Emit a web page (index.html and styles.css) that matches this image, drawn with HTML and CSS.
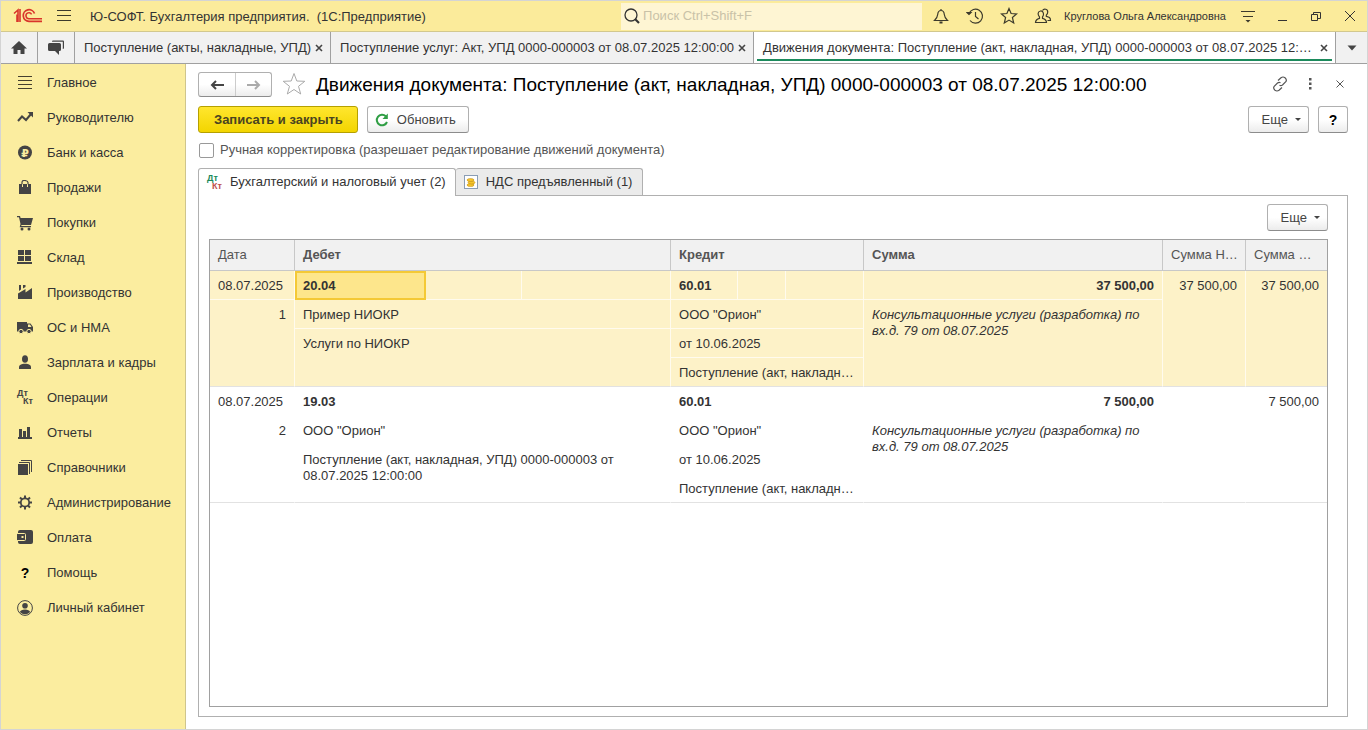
FILE: index.html
```
<!DOCTYPE html>
<html lang="ru">
<head>
  <meta charset="utf-8">
  <title>Движения документа</title>
  <link rel="stylesheet" href="styles.css">
</head>
<body>
  <header class="titlebar">
    <svg class="logo" width="30" height="16" viewBox="0 0 30 16" fill="none" stroke="#d9342b">
      <path d="M1 5.5L5 2v12M4 6.500V14M7 1v13" stroke-width="1.600"/>
      <path d="M21.500 5.500A5.800 5.800 0 1 0 16 13.300H29" stroke-width="1.700"/>
      <path d="M18.600 6.300A3 3 0 1 0 16.300 10.700H29" stroke-width="1.500"/>
    </svg>
    <button class="tool" aria-label="Меню">
      <svg width="16" height="14" viewBox="0 0 16 14" stroke="#3c3a2c"><path d="M1 1.500h14M1 6.500h14M1 11.500h14"/></svg>
    </button>
    <span class="app-name">Ю-СОФТ. Бухгалтерия предприятия.&nbsp; (1С:Предприятие)</span>
    <label class="search">
      <svg width="18" height="18" viewBox="0 0 18 18" fill="none" stroke="#333"><circle cx="8" cy="8" r="6" stroke-width="1.300"/><path d="M12 12l4 4" stroke-width="2.200"/></svg>
      <input type="text" placeholder="Поиск Ctrl+Shift+F" aria-label="Поиск">
    </label>
    <button class="tool" aria-label="Уведомления">
      <svg width="18" height="18" viewBox="0 0 18 18" fill="none" stroke="#3c3a2c" stroke-width="1.200"><path d="M9 2v1.500M2.500 13.500c2-2 3-3.500 3.200-6C5.900 5 7 3.500 9 3.500s3.100 1.500 3.300 4c.2 2.500 1.200 4 3.200 6z"/><path d="M7.500 15.500h3" stroke-width="2"/></svg>
    </button>
    <button class="tool" aria-label="История">
      <svg width="18" height="18" viewBox="0 0 18 18" fill="none" stroke="#3c3a2c" stroke-width="1.200"><path d="M3 6.500A7 7 0 1 1 4 13.500M9.500 5v4.500l3 2.500"/><path d="M1 5.500l2 2 2-2z" fill="#3c3a2c"/></svg>
    </button>
    <button class="tool" aria-label="Избранное">
      <svg width="18" height="18" viewBox="0 0 18 18" fill="none" stroke="#3c3a2c" stroke-width="1.200"><path d="M9 1.500l2.100 5 5.400.5-4.100 3.500 1.300 5.500L9 13.100 4.300 16l1.300-5.500L1.500 7l5.400-.5z"/></svg>
    </button>
    <button class="tool" aria-label="Пользователь">
      <svg width="18" height="18" viewBox="0 0 18 18" fill="none" stroke="#3c3a2c" stroke-width="1.200"><path d="M1.500 15.500c0-3 1.500-3.500 4-4.200V10C3.500 8 3.500 4.500 6.500 4S10.500 8 8.500 10v1.300c2.500.7 4 1.200 4 4.200z"/><path d="M8.500 3.500C10 1 14 2 13.700 5.200c0 1.500-.7 2.300-1.400 3v1.200c2.700.7 4.200 1.100 4.200 4.100h-3"/></svg>
    </button>
    <a class="user" href="#">Круглова Ольга Александровна</a>
    <button class="tool" aria-label="Настройки">
      <svg width="16" height="14" viewBox="0 0 16 14" stroke="#3c3a2c"><path d="M1 2.500h14M3 7.500h10"/><path d="M5.500 11h5L8 13.500z" fill="#3c3a2c" stroke="none"/></svg>
    </button>
    <button class="tool" aria-label="Свернуть">
      <svg width="12" height="12" viewBox="0 0 12 12" stroke="#333"><path d="M2 10.500h9"/></svg>
    </button>
    <button class="tool" aria-label="Развернуть">
      <svg width="12" height="12" viewBox="0 0 12 12" fill="none" stroke="#333"><path d="M1.500 4.500h6v6h-6zM3.500 4V2.500h7v6H8"/></svg>
    </button>
    <button class="tool" aria-label="Закрыть">
      <svg width="12" height="12" viewBox="0 0 12 12" stroke="#333"><path d="M1 1l10 10M11 1L1 11"/></svg>
    </button>
  </header>

  <nav class="windows">
    <button class="win-icon" aria-label="Начальная страница">
      <svg width="16" height="14" viewBox="0 0 16 14" fill="#444"><path d="M8 0L0 7.500h2.500V13h4V9h3v4h4V7.500H16z"/></svg>
    </button>
    <button class="win-icon" aria-label="Обсуждения">
      <svg width="18" height="16" viewBox="0 0 18 16" fill="#444"><path d="M5 1.500Q5 .5 6 .5h10q1 0 1 1V8q0 1-1.200 1V1.800H5z"/><path d="M2.500 3h10q1.500 0 1.500 1.500v5q0 1.500-1.500 1.500H12v4l-4-4H2.500Q1 11 1 9.500v-5Q1 3 2.500 3z"/></svg>
    </button>
    <div class="win"><a href="#">Поступление (акты, накладные, УПД)</a>
      <button aria-label="Закрыть"><svg width="8" height="8" viewBox="0 0 8 8" stroke="#444" stroke-width="1.600"><path d="M1 1l6 6M7 1L1 7"/></svg></button></div>
    <div class="win"><a href="#">Поступление услуг: Акт, УПД 0000-000003 от 08.07.2025 12:00:00</a>
      <button aria-label="Закрыть"><svg width="8" height="8" viewBox="0 0 8 8" stroke="#444" stroke-width="1.600"><path d="M1 1l6 6M7 1L1 7"/></svg></button></div>
    <div class="win current"><a href="#">Движения документа: Поступление (акт, накладная, УПД) 0000-000003 от 08.07.2025 12:…</a>
      <button aria-label="Закрыть"><svg width="8" height="8" viewBox="0 0 8 8" stroke="#444" stroke-width="1.600"><path d="M1 1l6 6M7 1L1 7"/></svg></button></div>
    <button class="win-more" aria-label="Все окна"><svg width="10" height="6" viewBox="0 0 10 6" fill="#444"><path d="M.5.500h9L5 5.500z"/></svg></button>
  </nav>

  <div class="workspace">
    <nav class="sections">
      <a href="#"><svg width="16" height="16" viewBox="0 0 16 16" stroke="#45402f"><path d="M1 1.500h14M1 5.500h14M1 9.500h14M1 13.500h14"/></svg>Главное</a>
      <a href="#"><svg width="16" height="16" viewBox="0 0 16 16" fill="none" stroke="#444"><path d="M1 11l4-4.500 4 3.500 5-6" stroke-width="2"/><path d="M10.500 2H16v5.500z" fill="#444" stroke="none"/></svg>Руководителю</a>
      <a href="#"><svg width="16" height="16" viewBox="0 0 16 16"><circle cx="8" cy="7.500" r="7" fill="#444"/><text class="rouble" x="8" y="12" text-anchor="middle">₽</text></svg>Банк и касса</a>
      <a href="#"><svg width="16" height="16" viewBox="0 0 16 16"><path d="M2 4h12v10H2z" fill="#444"/><path d="M5 6V2.500Q5 0 8 .5t3 2V6" fill="none" stroke="#444" stroke-width="1.200"/><path d="M5.500 4.200V7M10.500 4.200V7" stroke="#fbed9f"/></svg>Продажи</a>
      <a href="#"><svg width="16" height="16" viewBox="0 0 16 16" fill="#444"><path d="M0 1h3l.6 2H16l-2 7H4.500l-.3 1H14v1.200H2.700L3.500 9 2 2.300H0z"/><circle cx="5" cy="14" r="1.500"/><circle cx="12" cy="14" r="1.500"/></svg>Покупки</a>
      <a href="#"><svg width="16" height="16" viewBox="0 0 16 16" fill="#444"><path d="M1 0h6v5H1zM8 0h6v5H8zM1 6h6v5H1zM8 6h6v5H8zM0 12h15v2H0z"/></svg>Склад</a>
      <a href="#"><svg width="16" height="16" viewBox="0 0 16 16" fill="#444"><path d="M1 14V8.500L8.500 4v3.500L15 3v11z"/><path d="M2 0h2v4.500L2 6zM6 0h2.500v2L6 3.500z"/></svg>Производство</a>
      <a href="#"><svg width="16" height="16" viewBox="0 0 16 16"><path d="M0 2h10v1.500h3.500L16 7v4.500H0z" fill="#444"/><path d="M11 4.500h2L14.500 7H11z" fill="#fbed9f"/><g fill="#444" stroke="#fbed9f"><circle cx="4" cy="11.500" r="2.200"/><circle cx="12" cy="11.500" r="2.200"/></g></svg>ОС и НМА</a>
      <a href="#"><svg width="16" height="16" viewBox="0 0 16 16" fill="#444"><ellipse cx="8" cy="4" rx="3" ry="3.800"/><path d="M2 14v-2Q2 9.500 6.500 8.800h3Q14 9.500 14 12v2z"/></svg>Зарплата и кадры</a>
      <a href="#"><svg class="dtkt" width="16" height="16" viewBox="0 0 16 16" fill="#444"><text x="0" y="6">Дт</text><text x="6" y="14">Кт</text></svg>Операции</a>
      <a href="#"><svg width="16" height="16" viewBox="0 0 16 16" fill="#444"><path d="M1 12h14v2H1zM2 4h3v8H2zM6 6h3v6H6zM10 2h3v10h-3z"/></svg>Отчеты</a>
      <a href="#"><svg width="16" height="16" viewBox="0 0 16 16"><path d="M1 4h10v11H1z" fill="#444"/><path d="M2 2.500h10.500V14M4 .5h10.500V12" fill="none" stroke="#444"/></svg>Справочники</a>
      <a href="#"><svg width="16" height="16" viewBox="0 0 16 16" fill="none" stroke="#444"><circle cx="8" cy="7.500" r="4.200" stroke-width="1.800"/><path d="M8 .5V3M8 12v2.500M1 7.500h2.500M12.500 7.500H15M3 2.500l2 2M11 10.500l2 2M13 2.500l-2 2M5 10.500l-2 2" stroke-width="2"/></svg>Администрирование</a>
      <a href="#"><svg width="16" height="16" viewBox="0 0 16 16"><rect x="1" y="0" width="15" height="14" rx="2" fill="#444"/><rect x="0" y="3.500" width="8.500" height="7" rx="1" fill="#444" stroke="#fbed9f"/><path d="M0 4h2v6H0z" fill="#444"/><path d="M4.500 6h2v2h-2z" fill="#fbed9f"/></svg>Оплата</a>
      <a href="#"><b class="q">?</b>Помощь</a>
      <a href="#"><svg width="16" height="16" viewBox="0 0 16 16" fill="#444"><circle cx="8" cy="8" r="7.400" fill="none" stroke="#444"/><circle cx="8" cy="5.800" r="2.800"/><path d="M2.800 12q1-2.500 5.200-2.500t5.200 2.500Q11 14.200 8 14.200T2.800 12z"/></svg>Личный кабинет</a>
    </nav>

    <main class="form">
      <div class="form-head">
        <div class="history">
          <button aria-label="Назад"><svg width="14" height="10" viewBox="0 0 14 10" fill="none" stroke="#444" stroke-width="2"><path d="M14 5H2M6 1L2 5l4 4"/></svg></button>
          <button aria-label="Вперед"><svg width="14" height="10" viewBox="0 0 14 10" fill="none" stroke="#aaa" stroke-width="2"><path d="M0 5h12M8 1l4 4-4 4"/></svg></button>
        </div>
        <button class="plain star" aria-label="В избранное"><svg width="24" height="24" viewBox="0 0 24 24" fill="none" stroke="#aaa"><path d="M12 1.500l2.800 7.500 8 .3-6.300 5 2.200 7.700L12 17.500 5.300 22l2.200-7.700-6.300-5 8-.3z"/></svg></button>
        <h1>Движения документа: Поступление (акт, накладная, УПД) 0000-000003 от 08.07.2025 12:00:00</h1>
        <button class="plain" aria-label="Получить ссылку"><svg width="16" height="16" viewBox="0 0 16 16" fill="none" stroke="#555" stroke-width="1.200"><path d="M6 4.500L9 1.700q2-1.400 4 0 2.200 2 .8 4L10.500 9q-1.500 1.200-3 .3M10 11.500L7 14.300q-2 1.400-4 0-2.200-2-.8-4L5.500 7Q7 5.800 8.500 6.700"/></svg></button>
        <button class="plain" aria-label="Дополнительно"><svg width="4" height="12" viewBox="0 0 4 12" fill="#555"><path d="M1 0h2.500v2.500H1zM1 4.500h2.500V7H1zM1 9h2.500v2.500H1z"/></svg></button>
        <button class="plain" aria-label="Закрыть форму"><svg width="8" height="8" viewBox="0 0 8 8" stroke="#555"><path d="M.5.500l7 7M7.500.500l-7 7"/></svg></button>
      </div>

      <div class="commands">
        <button class="btn primary">Записать и закрыть</button>
        <button class="btn"><svg width="14" height="14" viewBox="0 0 14 14" fill="none" stroke="#2f9e44" stroke-width="2"><path d="M12 9A5.300 5.300 0 1 1 10.800 3.200"/><path d="M12.800.500V6H7.500z" fill="#2f9e44" stroke="none"/></svg>Обновить</button>
        <button class="btn more">Еще<i class="caret"></i></button>
        <button class="btn help">?</button>
      </div>

      <label class="manual"><input type="checkbox">Ручная корректировка (разрешает редактирование движений документа)</label>

      <div class="tabs" role="tablist">
        <button class="tab active" role="tab" aria-selected="true"><svg class="dtkt" width="16" height="16" viewBox="0 0 16 16"><text x="0" y="7" fill="#1a8a5a">Дт</text><text x="5" y="15" fill="#c0504d">Кт</text></svg>Бухгалтерский и налоговый учет (2)</button>
        <button class="tab" role="tab" aria-selected="false"><svg width="14" height="14" viewBox="0 0 14 14"><rect x=".5" y=".5" width="13" height="13" fill="#fff" stroke="#8a9db5"/><g fill="#f5c52c" stroke="#b98510" stroke-width=".5"><ellipse cx="6.500" cy="10" rx="3.500" ry="1.500"/><ellipse cx="7.500" cy="7.500" rx="3.500" ry="1.500"/><ellipse cx="6.500" cy="5" rx="3.500" ry="1.500"/></g></svg>НДС предъявленный (1)</button>
      </div>

      <section class="panel">
        <button class="btn more">Еще<i class="caret"></i></button>
        <div class="grid">
          <table>
            <colgroup>
              <col class="c-date"><col class="c-d1"><col class="c-d2"><col class="c-d3"><col class="c-k1"><col class="c-k2"><col class="c-k3"><col><col class="c-dt"><col class="c-kt">
            </colgroup>
            <thead>
              <tr>
                <th class="light">Дата</th>
                <th colspan="3">Дебет</th>
                <th colspan="3">Кредит</th>
                <th>Сумма</th>
                <th class="light">Сумма Н…</th>
                <th class="light">Сумма …</th>
              </tr>
            </thead>
            <tbody class="selected">
              <tr>
                <td>08.07.2025</td>
                <td class="acc cell-current">20.04</td><td></td><td></td>
                <td class="acc">60.01</td><td></td><td></td>
                <td class="acc num">37 500,00</td>
                <td class="num" rowspan="4">37 500,00</td>
                <td class="num last" rowspan="4">37 500,00</td>
              </tr>
              <tr>
                <td class="num" rowspan="3">1</td>
                <td colspan="3">Пример НИОКР</td>
                <td colspan="3">ООО "Орион"</td>
                <td class="note" rowspan="3">Консультационные услуги (разработка) по вх.д. 79 от 08.07.2025</td>
              </tr>
              <tr>
                <td colspan="3" rowspan="2">Услуги по НИОКР</td>
                <td colspan="3">от 10.06.2025</td>
              </tr>
              <tr>
                <td class="cut" colspan="3">Поступление (акт, накладн…</td>
              </tr>
            </tbody>
            <tbody>
              <tr>
                <td>08.07.2025</td>
                <td class="acc">19.03</td><td></td><td></td>
                <td class="acc">60.01</td><td></td><td></td>
                <td class="acc num">7 500,00</td>
                <td class="num" rowspan="4"></td>
                <td class="num last" rowspan="4">7 500,00</td>
              </tr>
              <tr>
                <td class="num" rowspan="3">2</td>
                <td colspan="3">ООО "Орион"</td>
                <td colspan="3">ООО "Орион"</td>
                <td class="note" rowspan="3">Консультационные услуги (разработка) по вх.д. 79 от 08.07.2025</td>
              </tr>
              <tr>
                <td colspan="3" rowspan="2">Поступление (акт, накладная, УПД) 0000-000003 от 08.07.2025 12:00:00</td>
                <td colspan="3">от 10.06.2025</td>
              </tr>
              <tr>
                <td class="cut" colspan="3">Поступление (акт, накладн…</td>
              </tr>
            </tbody>
          </table>
        </div>
      </section>
    </main>
  </div>
</body>
</html>
```
FILE: styles.css
```
* {
  box-sizing: border-box;
}
body {
  margin: 0;
  min-height: 100vh;
  display: flex;
  flex-direction: column;
  border: 1px solid #d4d4d4;
  background: #fff;
  color: #333;
  font: 13px/16px "Liberation Sans", Arial, sans-serif;
}
button, input {
  font: inherit;
  color: inherit;
}
button {
  display: flex;
  align-items: center;
  justify-content: center;
  padding: 0;
  border: none;
  background: none;
}
a {
  color: inherit;
  text-decoration: none;
}
svg {
  flex: none;
}

/* title bar */
.titlebar {
  display: flex;
  align-items: center;
  height: 31px;
  background: #fbeb9b;
  border-bottom: 1px solid #d2c88e;
}
.logo {
  margin-left: 12px;
}
.tool {
  width: 34px;
  height: 30px;
  flex: none;
}
.logo + .tool {
  width: 42px;
}
.app-name {
  margin-left: 5px;
  padding-top: 1px;
  white-space: nowrap;
}
.search {
  display: flex;
  align-items: center;
  width: 301px;
  height: 27px;
  margin: 0 2px 0 auto;
  padding-left: 2px;
  background: #fef5d3;
}
.search input {
  flex: 1;
  min-width: 0;
  padding: 0 2px;
  border: none;
  background: none;
  outline: none;
}
.search input::placeholder {
  color: #c9c2a8;
}
.user {
  margin: 0 5px 0 4px;
  font-size: 11px;
  white-space: nowrap;
}

/* open windows */
.windows {
  display: flex;
  height: 32px;
  background: #f1f1f1;
  border-bottom: 1px solid #a0a0a0;
}
.win-icon {
  width: 37px;
  flex: none;
  border-right: 1px solid #a0a0a0;
}
.win {
  display: flex;
  align-items: center;
  padding: 0 3px 0 9px;
  border-right: 1px solid #a0a0a0;
  white-space: nowrap;
}
.win button {
  width: 16px;
  height: 20px;
  flex: none;
}
.win.current {
  position: relative;
  flex: 1;
  min-width: 0;
  background: #fff;
}
.win.current a {
  flex: 1;
}
.win.current::after {
  content: "";
  position: absolute;
  left: 3px;
  right: 3px;
  bottom: 2px;
  height: 2px;
  background: #1c8a5c;
}
.win-more {
  width: 31px;
  flex: none;
}

.workspace {
  display: flex;
  flex: 1;
}

/* sections */
.sections {
  width: 185px;
  flex: none;
  padding-top: 1px;
  background: #fbed9f;
  border-right: 1px solid #cfc58c;
}
.sections a {
  display: flex;
  align-items: center;
  gap: 14px;
  height: 35px;
  padding-left: 16px;
}
.q {
  width: 16px;
  text-align: center;
  font-size: 14px;
  color: #000;
}
.dtkt {
  overflow: visible;
  font: bold 9px "Liberation Sans", Arial, sans-serif;
}
.rouble {
  font: bold 11px "DejaVu Sans", sans-serif;
  fill: #fbed9f;
}

/* form */
.form {
  display: flex;
  flex-direction: column;
  flex: 1;
  min-width: 0;
  padding: 8px 19px 12px 12px;
}
.form-head {
  display: flex;
  align-items: center;
  height: 25px;
}
.history {
  display: flex;
  height: 25px;
  border: 1px solid #b0b0b0;
  border-bottom-color: #8c8c8c;
  border-radius: 3px;
  background: linear-gradient(#fff 50%, #ececec);
}
.history button {
  width: 36px;
}
.history button + button {
  border-left: 1px solid #ccc;
}
h1 {
  flex: 1;
  margin: 0;
  color: #000;
  font-size: 19px;
  line-height: 24px;
  font-weight: normal;
  white-space: nowrap;
}
.plain {
  width: 30px;
  height: 23px;
  align-self: flex-start;
}
.plain:last-child {
  width: 16px;
  margin-left: 7px;
}
.plain.star {
  width: 24px;
  margin: 0 10px;
}
.commands {
  display: flex;
  gap: 9px;
  margin-top: 9px;
}
.btn {
  height: 27px;
  padding: 0 12px 0 7px;
  border: 1px solid #b0b0b0;
  border-bottom-color: #8c8c8c;
  border-radius: 3px;
  background: linear-gradient(#fff 50%, #ececec);
  color: #444;
}
.btn svg {
  margin-right: 8px;
}
.primary {
  padding: 0 14px 0 15px;
  border-color: #b5a000;
  background: linear-gradient(#ffe62e, #f3d500);
  color: #4a4420;
  font-weight: bold;
}
.more {
  padding: 0 7px 0 13px;
  margin-left: auto;
}
.help {
  width: 30px;
  padding: 0;
  color: #000;
  font-size: 14px;
  font-weight: bold;
}
.caret {
  margin-left: 7px;
  border: 3px solid transparent;
  border-top-color: #444;
  border-bottom: none;
}
.manual {
  display: flex;
  align-items: center;
  gap: 6px;
  height: 16px;
  margin-top: 9px;
  color: #555;
}
.manual input {
  appearance: none;
  width: 15px;
  height: 15px;
  margin: 0 0 0 1px;
  border: 1px solid #999;
  border-radius: 2px;
  background: #fff;
}
.manual input:checked {
  background: #ffdf2b;
}
.tabs {
  display: flex;
  margin-top: 10px;
}
.tab {
  height: 27px;
  gap: 8px;
  padding: 0 10px 0 8px;
  border: 1px solid #b0b0b0;
  border-bottom: none;
  border-radius: 3px 3px 0 0;
  background: #ebebeb;
}
.tab + .tab {
  border-left: none;
}
.tab.active {
  position: relative;
  height: 28px;
  gap: 7px;
  margin-bottom: -1px;
  padding: 0 9px 2px 8px;
  background: #fff;
}
.panel {
  display: flex;
  flex-direction: column;
  flex: 1;
  padding: 8px 19px 9px 10px;
  border: 1px solid #b0b0b0;
}
.grid {
  flex: 1;
  margin-top: 8px;
  border: 1px solid #a0a0a0;
}

/* entries */
table {
  width: 100%;
  table-layout: fixed;
  border-collapse: separate;
  border-spacing: 0;
}
.c-date { width: 85px; }
.c-d1 { width: 131px; }
.c-d2 { width: 96px; }
.c-d3 { width: 149px; }
.c-k1 { width: 67px; }
.c-k2 { width: 48px; }
.c-k3 { width: 78px; }
.c-dt { width: 83px; }
.c-kt { width: 81px; }
th {
  height: 31px;
  padding: 0 6px 0 8px;
  border-right: 1px solid #c8c8c8;
  border-bottom: 1px solid #c8c8c8;
  background: #f1f1f1;
  color: #555;
  text-align: left;
  white-space: nowrap;
}
th:last-child {
  border-right: none;
}
.light {
  font-weight: normal;
}
td {
  height: 29px;
  padding: 7px 8px 5px;
  border-right: 1px solid transparent;
  border-bottom: 1px solid transparent;
  vertical-align: top;
}
.selected td {
  background: #fdf2c8;
  border-color: #fffbee;
}
tbody tr:first-child td[rowspan],
tbody tr:nth-child(2) td[rowspan],
tbody tr:nth-child(3) td[rowspan],
tbody tr:last-child td {
  border-bottom-color: #e2e2e2;
}
td.last {
  border-right: none;
}
.acc {
  font-weight: bold;
}
.num {
  text-align: right;
}
.note {
  padding-right: 20px;
  font-style: italic;
}
.cut {
  padding-right: 4px;
  white-space: nowrap;
}
.selected .cell-current {
  background: #fde68c;
  outline: 2px solid #f4c936;
  outline-offset: -2px;
}
```
